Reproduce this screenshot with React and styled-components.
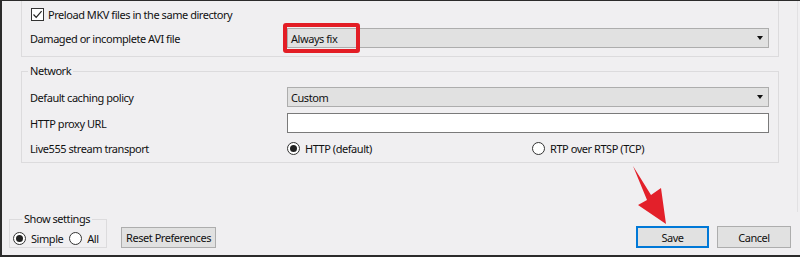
import React from 'react';
import styled, { createGlobalStyle } from 'styled-components';

const GlobalStyle = createGlobalStyle`
  html, body {
    margin: 0;
    padding: 0;
    background: #f0f0f0;
  }
  body {
    font-family: 'Noto Sans', 'Liberation Sans', sans-serif;
  }
`;

const Window = styled.div`
  position: relative;
  width: 800px;
  height: 257px;
  box-sizing: border-box;
  border-top: 1px solid #2b2b2b;
  border-left: 2px solid #2b2b2b;
  border-bottom: 2px solid #2b2b2b;
  background: #f0eff1;
  display: flex;
  flex-direction: column;
  overflow: hidden;
  font-size: 11px;
  letter-spacing: -0.45px;
  color: #111;
`;

const ScrollArea = styled.div`
  flex: 1;
  width: 796px;
  box-sizing: border-box;
  padding: 0 18px 0 19px;
  border-right: 1px solid #e2e1e3;
`;

const Group = styled.fieldset`
  margin: ${p => (p.$first ? '0' : '7px 0 0')};
  padding: ${p => (p.$first ? '4px 9px 8px 8px' : '9px 9px 4px 8px')};
  border: 1px solid #dcdbdd;
  border-top: ${p => (p.$first ? 'none' : '1px solid #dcdbdd')};
  min-width: 0;
`;

const Legend = styled.legend`
  padding: 0 2px;
  margin-left: ${p => p.$offset || -2}px;
  line-height: 14px;
  font-size: 11px;
`;

const Rows = styled.div`
  display: grid;
  grid-template-columns: 257px 1fr;
  row-gap: ${p => p.$gap}px;
`;

const Label = styled.div`
  display: flex;
  align-items: center;
  height: ${p => p.$h || 20}px;
`;

const CheckRow = styled.label`
  grid-column: 1 / 3;
  display: flex;
  align-items: center;
  gap: 4px;
  height: 19px;
  padding-left: 1px;
`;

const Box = styled.span`
  width: 13px;
  height: 13px;
  box-sizing: border-box;
  border: 1px solid #333;
  background: #fff;
  display: flex;
  align-items: center;
  justify-content: center;
`;

const Select = styled.div`
  height: 20px;
  box-sizing: border-box;
  border: 1px solid #adadad;
  background: #e1e1e1;
  display: flex;
  align-items: center;
  justify-content: space-between;
  padding: 0 5px 0 3px;
`;

const Caret = styled.span`
  width: 0;
  height: 0;
  border-left: 3.5px solid transparent;
  border-right: 3.5px solid transparent;
  border-top: 4px solid #111;
`;

const TextInput = styled.div`
  height: 20px;
  box-sizing: border-box;
  border: 1px solid #7a7a7a;
  background: #fff;
`;

const RadioGroup = styled.div`
  display: grid;
  grid-template-columns: 245px 1fr;
  align-items: center;
  height: 19px;
`;

const RadioItem = styled.label`
  display: flex;
  align-items: center;
  gap: ${p => p.$gap || 5}px;
`;

const Dot = styled.span`
  width: 13px;
  height: 13px;
  box-sizing: border-box;
  border-radius: 50%;
  border: 1px solid #333;
  background: #fff;
  display: flex;
  align-items: center;
  justify-content: center;

  &::after {
    content: '';
    width: 7px;
    height: 7px;
    border-radius: 50%;
    background: ${p => (p.$on ? '#222' : 'transparent')};
  }
`;

const Footer = styled.div`
  display: flex;
  align-items: flex-end;
  padding: 0 9px 7px 7px;
`;

const SettingsBox = styled.fieldset`
  margin: 0;
  width: 98px;
  box-sizing: border-box;
  padding: 5px 3px 1px 3px;
  border: 1px solid #dcdbdd;
  display: flex;
  align-items: center;
  gap: 6px;
`;

const Button = styled.div`
  height: ${p => p.$h || 22}px;
  width: ${p => p.$w}px;
  box-sizing: border-box;
  border: ${p => (p.$primary ? '2px solid #0078d7' : '1px solid #adadad')};
  background: #e1e1e1;
  display: flex;
  align-items: center;
  justify-content: center;
  margin-left: ${p => p.$ml || 0}px;
`;

const Spacer = styled.div`
  flex: 1;
`;

const Highlight = styled.div`
  position: absolute;
  left: 281px;
  top: 22px;
  width: 77px;
  height: 30px;
  box-sizing: border-box;
  border: 4px solid #e31d25;
  border-radius: 3px;
  pointer-events: none;
`;

const Arrow = styled.svg`
  position: absolute;
  left: 626px;
  top: 164px;
  pointer-events: none;
`;

export default function App() {
  return (
    <>
      <GlobalStyle />
      <Window>
        <ScrollArea>
          <Group $first>
            <Rows $gap={4}>
              <CheckRow>
                <Box>
                  <svg width="11" height="11" viewBox="0 0 11 11">
                    <path d="M1.5 5.5 L4.2 8.3 L9.6 2.2" fill="none" stroke="#222" strokeWidth="1.2" />
                  </svg>
                </Box>
                Preload MKV files in the same directory
              </CheckRow>
              <Label>Damaged or incomplete AVI file</Label>
              <Select>
                <span>Always fix</span>
                <Caret />
              </Select>
            </Rows>
          </Group>

          <Group>
            <Legend>Network</Legend>
            <Rows $gap={6}>
              <Label>Default caching policy</Label>
              <Select>
                <span>Custom</span>
                <Caret />
              </Select>
              <Label>HTTP proxy URL</Label>
              <TextInput />
              <Label $h={19}>Live555 stream transport</Label>
              <RadioGroup>
                <RadioItem>
                  <Dot $on />
                  HTTP (default)
                </RadioItem>
                <RadioItem>
                  <Dot />
                  RTP over RTSP (TCP)
                </RadioItem>
              </RadioGroup>
            </Rows>
          </Group>
        </ScrollArea>

        <Footer>
          <SettingsBox>
            <Legend $offset={9}>Show settings</Legend>
            <RadioItem $gap={5}>
              <Dot $on />
              Simple
            </RadioItem>
            <RadioItem $gap={5}>
              <Dot />
              All
            </RadioItem>
          </SettingsBox>
          <Button $w={95} $h={21} $ml={14}>Reset Preferences</Button>
          <Spacer />
          <Button $w={73} $primary>Save</Button>
          <Button $w={74} $ml={8}>Cancel</Button>
        </Footer>

        <Highlight />
        <Arrow width="44" height="64" viewBox="628 166 44 64">
          <polygon
            points="633,167 651,196 661,189 666,225 638,206 647,201"
            fill="#e3202a"
          />
        </Arrow>
      </Window>
    </>
  );
}
